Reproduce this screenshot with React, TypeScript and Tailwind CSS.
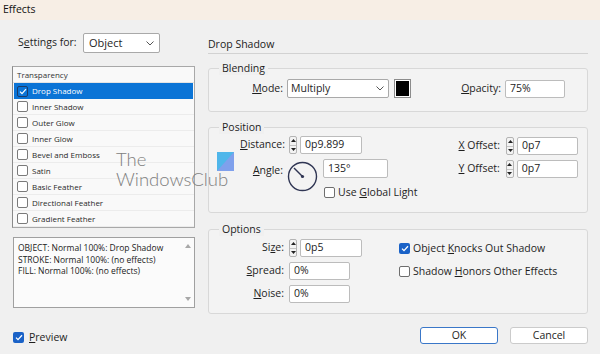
import React from "react";

const FONT = { fontFamily: '"Open Sans", "Noto Sans", sans-serif' };

function U({ pre, u, post }: { pre?: string; u: string; post?: string }) {
  return (
    <span>
      {pre}
      <span className="underline underline-offset-[1px]">{u}</span>
      {post}
    </span>
  );
}

function Spinner() {
  return (
    <div className="w-[8px] h-[18px] border border-[#b4b4b4] rounded-[2px] bg-[#f3f3f3] flex flex-col">
      <div className="flex-1 flex items-center justify-center border-b border-[#c4c4c4]">
        <svg width="5" height="3" viewBox="0 0 5 3">
          <path d="M0 3 L2.5 0 L5 3 Z" fill="#222" />
        </svg>
      </div>
      <div className="flex-1 flex items-center justify-center">
        <svg width="5" height="3" viewBox="0 0 5 3">
          <path d="M0 0 L2.5 3 L5 0 Z" fill="#222" />
        </svg>
      </div>
    </div>
  );
}

function Input({ w, value, h = "h-[18px]" }: { w: string; value: string; h?: string }) {
  return (
    <div className={`${w} ${h} bg-white border border-[#bcbcbc] rounded-[2px] flex items-center pl-[4px] text-[10.5px] text-[#222]`}>
      {value}
    </div>
  );
}

function Chevron() {
  return (
    <svg width="8" height="5" viewBox="0 0 8 5">
      <path d="M0.5 0.5 L4 4 L7.5 0.5" fill="none" stroke="#555" strokeWidth="1" />
    </svg>
  );
}

function BlueCheck() {
  return (
    <div className="w-[11px] h-[11px] rounded-[2px] bg-[#1a62c7] flex items-center justify-center">
      <svg width="8" height="7" viewBox="0 0 8 7">
        <path d="M1 3.6 L3 5.6 L7 1.2" fill="none" stroke="#fff" strokeWidth="1.3" />
      </svg>
    </div>
  );
}

function EmptyCheck() {
  return <div className="w-[11px] h-[11px] rounded-[2px] border border-[#6e6e6e] bg-white" />;
}

const items = [
  "Inner Shadow",
  "Outer Glow",
  "Inner Glow",
  "Bevel and Emboss",
  "Satin",
  "Basic Feather",
  "Directional Feather",
  "Gradient Feather",
];

export default function App() {
  return (
    <div className="w-[600px] h-[354px] bg-[#f0f0f0] relative overflow-hidden text-[#1e1e1e]" style={FONT}>
      {/* title bar */}
      <div className="h-[20px] bg-[#f7eee5] flex items-center pl-[3px] text-[10.5px] text-[#111]">Effects</div>

      <div className="flex">
        {/* left column */}
        <div className="ml-[12px] w-[183px] flex flex-col">
          <div className="mt-[13px] h-[20px] flex items-center pl-[6px]">
            <div className="w-[65px] text-[10.5px]">
              <U pre="S" u="e" post="ttings for:" />
            </div>
            <div className="w-[77px] h-[20px] bg-white border border-[#a9a9a9] rounded-[2px] flex items-center justify-between pl-[5px] pr-[5px] text-[11px]">
              <span>Object</span>
              <Chevron />
            </div>
          </div>

          <div className="mt-[13px] h-[162px] bg-[#f9f9f9] border border-[#a8a8a8] border-l-[#8a8a8a] flex flex-col">
            <div className="h-[16px] flex items-center pl-[4px] text-[8px] text-[#333] border-b border-[#e4e4e4]">
              Transparency
            </div>
            <div className="h-[16px] mx-[1px] bg-[#0b74d6] flex items-center pl-[3px] text-[8px] text-white">
              <div className="w-[11px] h-[11px] rounded-[2px] border border-[#1b3c6a] bg-[#0b74d6] flex items-center justify-center">
                <svg width="8" height="7" viewBox="0 0 8 7">
                  <path d="M1 3.6 L3 5.6 L7 1.2" fill="none" stroke="#fff" strokeWidth="1.2" />
                </svg>
              </div>
              <span className="ml-[4px]">Drop Shadow</span>
            </div>
            {items.map((t) => (
              <div key={t} className="h-[16px] flex items-center pl-[4px] text-[8px] text-[#2a2a2a] border-b border-[#ececec]">
                <div className="w-[11px] h-[11px] rounded-[2px] border border-[#7a7a7a] bg-white" />
                <span className="ml-[4px]">{t}</span>
              </div>
            ))}
          </div>

          <div className="mt-[9px] ml-[1px] w-[182px] h-[71px] bg-[#fbfbfb] border border-[#a0a0a0] flex">
            <div className="flex-1 pl-[4px] pt-[4px] text-[8.5px] leading-[11.5px] text-[#222]">
              <div>OBJECT: Normal 100%: Drop Shadow</div>
              <div>STROKE: Normal 100%: (no effects)</div>
              <div>FILL: Normal 100%: (no effects)</div>
            </div>
            <div className="w-[12px] flex flex-col items-center justify-between py-[6px]">
              <svg width="6" height="4" viewBox="0 0 6 4">
                <path d="M0 4 L3 0 L6 4 Z" fill="#a8a8a8" />
              </svg>
              <svg width="6" height="4" viewBox="0 0 6 4">
                <path d="M0 0 L3 4 L6 0 Z" fill="#a8a8a8" />
              </svg>
            </div>
          </div>

          <div className="mt-[24px] ml-[1px] h-[11px] flex items-center">
            <BlueCheck />
            <span className="ml-[5px] text-[10.5px]">
              <U u="P" post="review" />
            </span>
          </div>
        </div>

        {/* right column */}
        <div className="ml-[13px] w-[380px] flex flex-col">
          <div className="mt-[17px] h-[17px] border-b border-[#d2d2d2] text-[10.5px] leading-[14px] text-[#222]">
            Drop Shadow
          </div>

          {/* Blending */}
          <fieldset className="mt-[7px] h-[51px] border border-[#d8d8d8] rounded-[3px] bg-[#f3f3f3]">
            <legend className="ml-[10px] px-[3px] text-[10.5px] leading-[14px] bg-[#f0f0f0]">Blending</legend>
            <div className="mt-[4px] h-[19px] flex items-center text-[10.5px]">
              <div className="w-[74px] text-right">
                <U u="M" post="ode:" />
              </div>
              <div className="ml-[4px] w-[102px] h-[19px] bg-white border border-[#a9a9a9] rounded-[2px] flex items-center justify-between pl-[3px] pr-[4px]">
                <span>Multiply</span>
                <Chevron />
              </div>
              <div className="ml-[5px] w-[17px] h-[19px] border border-[#8c8c8c] bg-white p-[1px]">
                <div className="w-full h-full bg-black" />
              </div>
              <div className="w-[90px] text-right">
                <U u="O" post="pacity:" />
              </div>
              <div className="ml-[4px]">
                <Input w="w-[60px]" value="75%" />
              </div>
            </div>
          </fieldset>

          {/* Position */}
          <fieldset className="mt-[8px] h-[93px] border border-[#d8d8d8] rounded-[3px] bg-[#f3f3f3]">
            <legend className="ml-[10px] px-[3px] text-[10.5px] leading-[14px] bg-[#f0f0f0]">Position</legend>
            <div className="flex justify-between pr-[9px] text-[10.5px]">
              <div className="flex flex-col">
                <div className="mt-[2px] h-[18px] flex items-center">
                  <div className="w-[76px] text-right">
                    <U u="D" post="istance:" />
                  </div>
                  <div className="ml-[4px]">
                    <Spinner />
                  </div>
                  <div className="ml-[3px]">
                    <Input w="w-[62px]" value="0p9.899" />
                  </div>
                </div>
                <div className="mt-[4px] flex items-start">
                  <div className="w-[74px] text-right mt-[5px] leading-[14px]">
                    <U u="A" post="ngle:" />
                  </div>
                  <svg className="ml-[4px] mt-[3px]" width="31" height="31" viewBox="0 0 31 31">
                    <circle cx="15.5" cy="15.5" r="14" fill="none" stroke="#2f3553" strokeWidth="1.4" />
                    <line x1="15.5" y1="15.5" x2="7" y2="7" stroke="#2f3553" strokeWidth="1.4" />
                    <circle cx="15.5" cy="15.5" r="1.6" fill="#2f3553" />
                  </svg>
                  <div className="ml-[5px] flex flex-col">
                    <div className="mt-[1px]">
                      <Input w="w-[65px]" h="h-[19px]" value="135°" />
                    </div>
                    <div className="mt-[9px] ml-[1px] h-[11px] flex items-center">
                      <EmptyCheck />
                      <span className="ml-[3px]">
                        Use <U u="G" post="lobal Light" />
                      </span>
                    </div>
                  </div>
                </div>
              </div>
              <div className="flex flex-col">
                <div className="mt-[3px] h-[18px] flex items-center">
                  <span>
                    <U u="X" post=" Offset:" />
                  </span>
                  <div className="ml-[6px]">
                    <Spinner />
                  </div>
                  <div className="ml-[3px]">
                    <Input w="w-[61px]" value="0p7" />
                  </div>
                </div>
                <div className="mt-[5px] h-[18px] flex items-center">
                  <span>
                    <U u="Y" post=" Offset:" />
                  </span>
                  <div className="ml-[6px]">
                    <Spinner />
                  </div>
                  <div className="ml-[3px]">
                    <Input w="w-[61px]" value="0p7" />
                  </div>
                </div>
              </div>
            </div>
          </fieldset>

          {/* Options */}
          <fieldset className="mt-[9px] h-[92px] border border-[#d8d8d8] rounded-[3px] bg-[#f3f3f3]">
            <legend className="ml-[10px] px-[3px] text-[10.5px] leading-[14px] bg-[#f0f0f0]">Options</legend>
            <div className="flex text-[10.5px]">
              <div className="w-[190px] flex flex-col">
                <div className="mt-[3px] h-[18px] flex items-center">
                  <div className="w-[75px] text-right">
                    <U pre="Si" u="z" post="e:" />
                  </div>
                  <div className="ml-[5px]">
                    <Spinner />
                  </div>
                  <div className="ml-[3px]">
                    <Input w="w-[62px]" value="0p5" />
                  </div>
                </div>
                <div className="mt-[5px] h-[18px] flex items-center">
                  <div className="w-[75px] text-right">
                    <U u="S" post="pread:" />
                  </div>
                  <div className="ml-[5px]">
                    <Input w="w-[61px]" value="0%" />
                  </div>
                </div>
                <div className="mt-[5px] h-[18px] flex items-center">
                  <div className="w-[75px] text-right">
                    <U u="N" post="oise:" />
                  </div>
                  <div className="ml-[5px]">
                    <Input w="w-[61px]" value="0%" />
                  </div>
                </div>
              </div>
              <div className="flex flex-col">
                <div className="mt-[7px] h-[11px] flex items-center">
                  <BlueCheck />
                  <span className="ml-[3px]">
                    Object <U u="K" post="nocks Out Shadow" />
                  </span>
                </div>
                <div className="mt-[12px] h-[11px] flex items-center">
                  <EmptyCheck />
                  <span className="ml-[3px]">
                    Shadow <U u="H" post="onors Other Effects" />
                  </span>
                </div>
              </div>
            </div>
          </fieldset>

          <div className="mt-[13px] flex justify-end gap-[12px] text-[10.5px]">
            <div className="w-[78px] h-[17px] rounded-[3px] border-[1.5px] border-[#3a77c8] bg-white flex items-center justify-center">
              OK
            </div>
            <div className="w-[78px] h-[17px] rounded-[3px] border border-[#cbcbcb] bg-white flex items-center justify-center">
              Cancel
            </div>
          </div>
        </div>
      </div>

      {/* watermark */}
      <div className="absolute left-[116px] top-[149px] text-[#808080] text-[18.5px] leading-[20px] font-light" style={{ fontFamily: 'Lato, "Open Sans", sans-serif' }}>
        <div>The</div>
        <div>WindowsClub</div>
      </div>
      <svg className="absolute left-[217px] top-[152px]" width="17" height="19" viewBox="0 0 17 19">
        <rect x="0" y="0" width="17" height="19" fill="#7fa0ec" />
        <path d="M0 0 H17 L0 19 Z" fill="#4fb6ea" />
      </svg>
    </div>
  );
}
